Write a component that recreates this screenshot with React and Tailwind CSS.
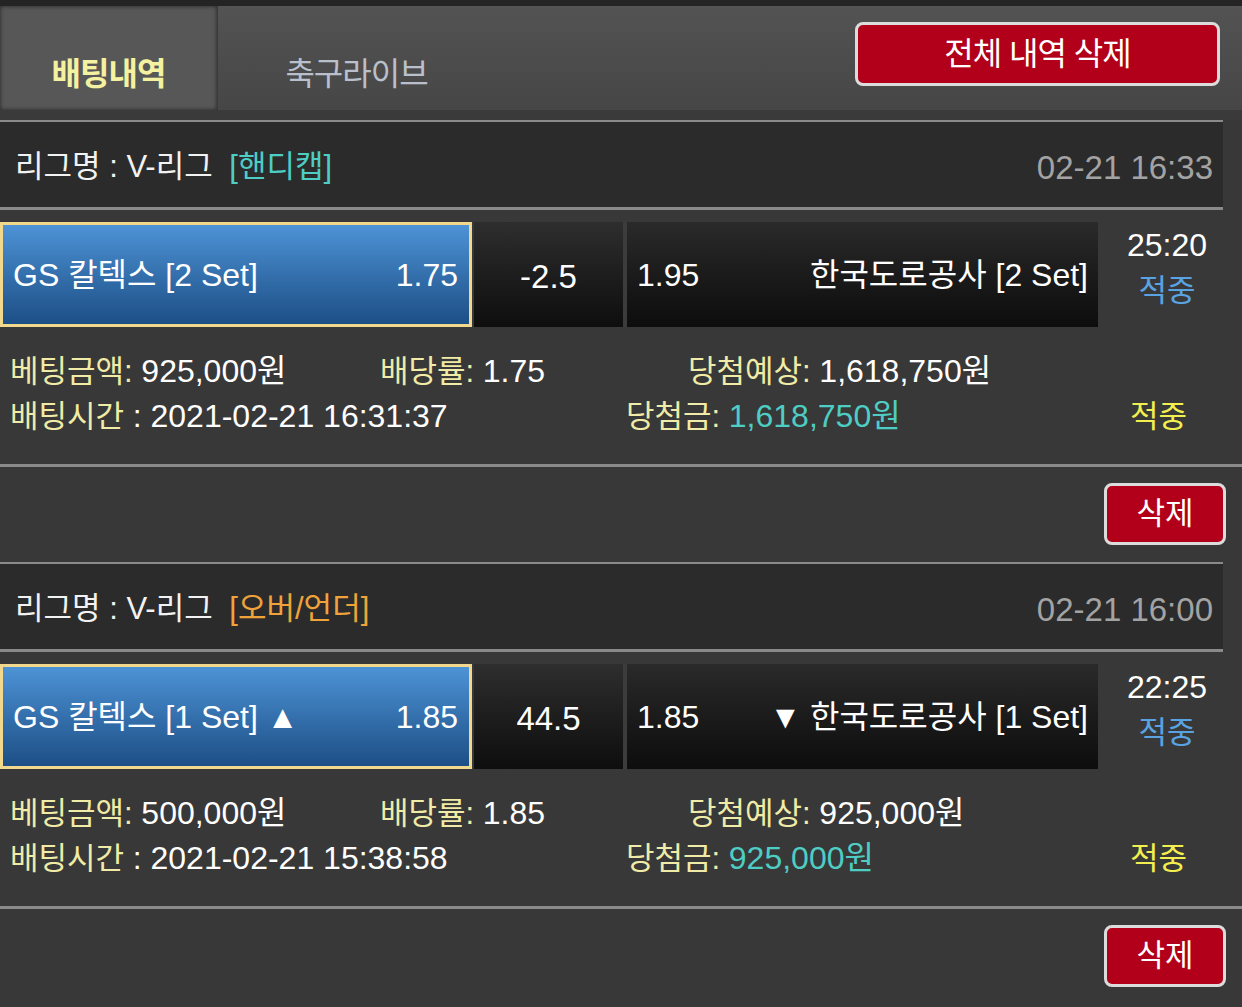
import React from "react";

const bets = [
  {
    type: "[핸디캡]",
    typeColor: "text-[#4ecdc4]",
    date: "02-21 16:33",
    home: "GS 칼텍스 [2 Set]",
    homeOdds: "1.75",
    line: "-2.5",
    awayOdds: "1.95",
    away: "한국도로공사 [2 Set]",
    score: "25:20",
    amount: "925,000원",
    rate: "1.75",
    expect: "1,618,750원",
    time: "2021-02-21 16:31:37",
    win: "1,618,750원",
  },
  {
    type: "[오버/언더]",
    typeColor: "text-[#f0a33a]",
    date: "02-21 16:00",
    home: "GS 칼텍스 [1 Set] ▲",
    homeOdds: "1.85",
    line: "44.5",
    awayOdds: "1.85",
    away: "▼ 한국도로공사 [1 Set]",
    score: "22:25",
    amount: "500,000원",
    rate: "1.85",
    expect: "925,000원",
    time: "2021-02-21 15:38:58",
    win: "925,000원",
  },
];

function Bet({ b }) {
  return (
    <div>
      <div className="w-[1223px] h-[90px] border-t-2 border-b-[3px] border-[#8a8a8a] bg-[#2b2b2b] flex items-center justify-between pl-[15px] pr-[10px] pt-[6px]">
        <div className="text-[31px] text-[#f2f2f2]">
          리그명 : V-리그 <span className={`ml-[8px] ${b.typeColor}`}>{b.type}</span>
        </div>
        <div className="text-[33px] text-[#a3a3a3]">{b.date}</div>
      </div>
      <div className="mt-[12px] flex h-[105px]">
        <div className="w-[472px] h-full border-[3px] border-[#f2d88c] bg-gradient-to-b from-[#4d93d6] to-[#1d4f86] flex items-center justify-between pl-[10px] pr-[11px] text-white text-[32px]">
          <span>{b.home}</span>
          <span>{b.homeOdds}</span>
        </div>
        <div className="ml-[2px] w-[149px] h-full bg-gradient-to-b from-[#2e2e2e] to-[#0e0e0e] flex items-center justify-center pt-[4px] text-white text-[33px]">
          {b.line}
        </div>
        <div className="w-[4px] h-full bg-[#3c3c3c]" />
        <div className="w-[471px] h-full bg-gradient-to-b from-[#2a2a2a] to-[#0d0d0d] flex items-center justify-between pl-[10px] pr-[10px] text-white text-[32px]">
          <span>{b.awayOdds}</span>
          <span>{b.away}</span>
        </div>
        <div className="w-[138px] h-full flex flex-col items-center justify-start text-[32px] leading-[46px]">
          <span className="text-white">{b.score}</span>
          <span className="text-[#5aa3e2] text-[31px]">적중</span>
        </div>
      </div>
      <div className="h-[140px] pt-[22px] border-b-[3px] border-[#8a8a8a] text-[31px] leading-[45px]">
        <div className="flex">
          <div className="w-[380px] pl-[10px]">
            <span className="text-[#f0eba6]">베팅금액:</span> <span className="text-white text-[32px]">{b.amount}</span>
          </div>
          <div className="w-[308px]">
            <span className="text-[#f0eba6]">배당률:</span> <span className="text-white text-[32px]">{b.rate}</span>
          </div>
          <div>
            <span className="text-[#f0eba6]">당첨예상:</span> <span className="text-white text-[32px]">{b.expect}</span>
          </div>
        </div>
        <div className="flex">
          <div className="w-[626px] pl-[10px]">
            <span className="text-[#f0eba6]">배팅시간</span> <span className="text-white text-[32px]">: {b.time}</span>
          </div>
          <div className="w-[504px]">
            <span className="text-[#f0eba6]">당첨금:</span> <span className="text-[#4ecdc4] text-[32px]">{b.win}</span>
          </div>
          <div className="text-[#f2ef4e]">적중</div>
        </div>
      </div>
      <div className="h-[95px] flex justify-end items-start pt-[16px] pr-[16px]">
        <button className="w-[122px] h-[62px] rounded-[8px] border-[3px] border-[#dcdcdc] bg-[#b2001a] text-white text-[31px] flex items-center justify-center">
          삭제
        </button>
      </div>
    </div>
  );
}

export default function App() {
  return (
    <div className="w-[1242px] h-[1007px] overflow-hidden bg-[#383838] font-[family-name:Liberation_Sans,Noto_Sans_CJK_KR,sans-serif]">
      <div className="h-[6px] bg-[#242424]" />
      <div className="h-[104px] flex bg-gradient-to-b from-[#535353] to-[#464646]">
        <div className="w-[218px] h-full bg-[#575757] shadow-[inset_0_0_4px_rgba(0,0,0,0.6)] border-r border-[#3a3a3a] flex items-end justify-center pb-[12px]">
          <span className="text-[32px] font-bold text-[#f4f1a0] tracking-[-1px]">배팅내역</span>
        </div>
        <div className="w-[277px] h-full flex items-end justify-center pb-[12px]">
          <span className="text-[32px] text-[#b9c0cb] tracking-[-1px]">축구라이브</span>
        </div>
        <div className="ml-auto mr-[22px] mt-[16px] w-[365px] h-[64px] rounded-[8px] border-[3px] border-[#dcdcdc] bg-[#b2001a] flex items-center justify-center text-white text-[32px] tracking-[-1px]">
          전체 내역 삭제
        </div>
      </div>
      <div className="h-[10px] bg-[#3a3a3a]" />
      {bets.map((b, i) => (
        <Bet key={i} b={b} />
      ))}
    </div>
  );
}
